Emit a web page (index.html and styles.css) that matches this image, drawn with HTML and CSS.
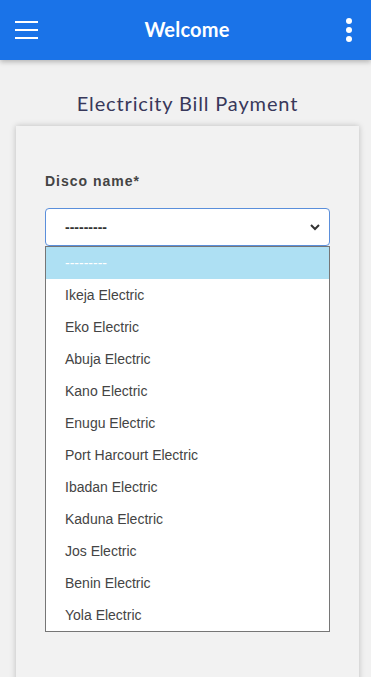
FILE: index.html
```html
<!DOCTYPE html>
<html>
<head>
<meta charset="utf-8">
<link rel="stylesheet" href="styles.css">
</head>
<body>
<header class="topbar">
  <button class="icon-btn" aria-label="menu">
    <svg width="24" height="20" viewBox="0 0 24 20"><rect x="0" y="1" width="23" height="2" fill="#fff"/><rect x="0" y="9" width="23" height="2" fill="#fff"/><rect x="0" y="17" width="23" height="2" fill="#fff"/></svg>
  </button>
  <div class="topbar-title">Welcome</div>
  <button class="icon-btn right" aria-label="more">
    <svg width="8" height="24" viewBox="0 0 8 24"><circle cx="4" cy="3" r="3" fill="#fff"/><circle cx="4" cy="12" r="3" fill="#fff"/><circle cx="4" cy="21" r="3" fill="#fff"/></svg>
  </button>
</header>
<h1 class="page-title">Electricity Bill Payment</h1>
<main class="card">
  <label class="field-label">Disco name*</label>
  <div class="select">
    <span class="select-value">---------</span>
    <svg class="chevron" width="10" height="8" viewBox="0 0 10 8"><path d="M1 2 L5 6 L9 2" stroke="#333" stroke-width="2" fill="none"/></svg>
  </div>
  <ul class="options">
    <li class="option selected">---------</li>
    <li class="option">Ikeja Electric</li>
    <li class="option">Eko Electric</li>
    <li class="option">Abuja Electric</li>
    <li class="option">Kano Electric</li>
    <li class="option">Enugu Electric</li>
    <li class="option">Port Harcourt Electric</li>
    <li class="option">Ibadan Electric</li>
    <li class="option">Kaduna Electric</li>
    <li class="option">Jos Electric</li>
    <li class="option">Benin Electric</li>
    <li class="option">Yola Electric</li>
  </ul>
</main>
</body>
</html>
```
FILE: styles.css
```css
* { box-sizing: border-box; }
html, body { margin: 0; padding: 0; }
body {
  background: #f1f1f1;
  font-family: "Liberation Sans", Arial, sans-serif;
  overflow: hidden;
}
.topbar {
  height: 60px;
  background: #1a73e8;
  display: grid;
  grid-template-columns: 1fr auto 1fr;
  align-items: center;
  padding: 0 18px 0 15px;
  box-shadow: 0 2px 5px rgba(0,0,0,0.25);
  position: relative;
  z-index: 2;
}
.icon-btn {
  background: none;
  border: 0;
  padding: 0;
  display: flex;
  align-items: center;
}
.icon-btn.right { justify-self: end; }
.topbar-title {
  color: #fff;
  font-family: Lato, sans-serif;
  font-weight: 700;
  font-size: 20px;
  letter-spacing: 0.2px;
  margin-left: 6px;
  margin-bottom: 2px;
}
.page-title {
  margin: 32px 0 11px;
  padding-left: 4px;
  text-align: center;
  font-family: Lato, sans-serif;
  font-weight: 400;
  font-size: 20px;
  line-height: 23px;
  letter-spacing: 0.85px;
  color: #38385a;
}
.card {
  margin: 0 12px 0 16px;
  background: #f2f2f2;
  min-height: 600px;
  padding: 45px 29px 0;
  box-shadow: 0 0 6px rgba(0,0,0,0.22);
}
.field-label {
  display: block;
  font-family: "Liberation Sans", Arial, sans-serif;
  font-weight: 700;
  font-size: 14px;
  line-height: 20px;
  letter-spacing: 1px;
  color: #444;
  margin-bottom: 17px;
}
.select {
  height: 38px;
  background: #fff;
  border: 1px solid #5b8fdb;
  border-radius: 4px;
  display: flex;
  align-items: center;
  justify-content: space-between;
  padding: 0 9px 0 19px;
}
.select-value {
  font-weight: 700;
  font-size: 14px;
  color: #333;
}
.options {
  list-style: none;
  margin: 0;
  padding: 0;
  background: #fff;
  border: 1px solid #767676;
}
.option {
  height: 32px;
  line-height: 32px;
  padding-left: 19px;
  font-size: 14px;
  color: #444;
}
.option.selected {
  background: #aee0f3;
  color: #fff;
}
```
